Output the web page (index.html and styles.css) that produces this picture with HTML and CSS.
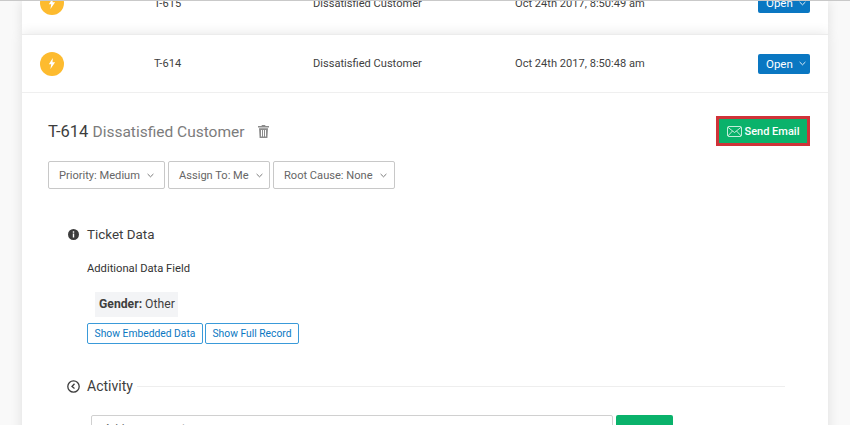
FILE: index.html
```html
<!DOCTYPE html>
<html lang="en">
<head>
<meta charset="utf-8">
<title>Tickets</title>
<link rel="stylesheet" href="styles.css">
</head>
<body>
<div class="page">
  <div class="card card-prev">
    <div class="row">
      <span class="bolt"><svg viewBox="0 0 10 14" width="8" height="11"><path d="M6 0 1 8h3L3 14l6-8.500H5.700z" fill="#fff"/></svg></span>
      <span class="cell-id">T-615</span>
      <span class="cell-name">Dissatisfied Customer</span>
      <span class="cell-date">Oct 24th 2017, 8:50:49 am</span>
      <button class="open">Open <svg class="chev" viewBox="0 0 8 5" width="7" height="5"><path d="M.7.8 4 4 7.300.8" fill="none" stroke="#fff" stroke-width="1"/></svg></button>
    </div>
  </div>
  <div class="card card-main">
    <div class="row row-main">
      <span class="bolt"><svg viewBox="0 0 10 14" width="8" height="11"><path d="M6 0 1 8h3L3 14l6-8.500H5.700z" fill="#fff"/></svg></span>
      <span class="cell-id">T-614</span>
      <span class="cell-name">Dissatisfied Customer</span>
      <span class="cell-date">Oct 24th 2017, 8:50:48 am</span>
      <button class="open">Open <svg class="chev" viewBox="0 0 8 5" width="7" height="5"><path d="M.7.8 4 4 7.300.8" fill="none" stroke="#fff" stroke-width="1"/></svg></button>
    </div>
    <div class="detail">
      <div class="title-row">
        <h1 class="title"><span class="title-id">T-614</span> <span class="title-name">Dissatisfied Customer</span></h1>
        <svg class="trash" viewBox="0 0 11 12" width="11" height="13" preserveAspectRatio="none"><path d="M4 0h3l.6 1H11v1.300H0V1h3.400zM1 3h9l-.6 9H1.600zM3 4.500v6h1v-6zm2 0v6h1v-6zm2 0v6h1v-6z" fill="#8b8b8b" fill-rule="evenodd"/></svg>
        <button class="send"><svg viewBox="0 0 15 11" width="15" height="11"><g fill="none" stroke="#d9f3e6" stroke-width=".9"><rect x=".5" y=".5" width="14" height="10" rx="1.500"/><path d="M.8 1.200 7.500 6.500l6.700-5.300M.8 10 5.500 5M14.200 10 9.500 5"/></g></svg>Send Email</button>
      </div>
      <div class="filters">
        <button class="filter filter-1">Priority: Medium <svg class="chev" viewBox="0 0 8 5" width="7" height="5"><path d="M.7.8 4 4 7.300.8" fill="none" stroke="#666" stroke-width="1"/></svg></button>
        <button class="filter filter-2">Assign To: Me <svg class="chev" viewBox="0 0 8 5" width="7" height="5"><path d="M.7.8 4 4 7.300.8" fill="none" stroke="#666" stroke-width="1"/></svg></button>
        <button class="filter filter-3">Root Cause: None <svg class="chev" viewBox="0 0 8 5" width="7" height="5"><path d="M.7.8 4 4 7.300.8" fill="none" stroke="#666" stroke-width="1"/></svg></button>
      </div>
      <section class="ticket-data">
        <h2 class="section-head">
          <svg class="section-icon" viewBox="0 0 11 11" width="11" height="11"><path d="M5.500 0a5.500 5.500 0 1 0 0 11 5.500 5.500 0 0 0 0-11zM4.800 2.300h1.400v1.400H4.800zm0 2.300h1.400v3.900H4.800z" fill="#3d3d3d" fill-rule="evenodd"/></svg>
          <span class="head-ticket">Ticket Data</span>
        </h2>
        <div class="indent">
          <p class="field-label">Additional Data Field</p>
          <div class="chip"><b>Gender:</b> Other</div>
          <div class="links">
            <button class="link">Show Embedded Data</button>
            <button class="link">Show Full Record</button>
          </div>
        </div>
      </section>
      <section class="activity">
        <h2 class="section-head">
          <svg class="section-icon clock" viewBox="0 0 13 13" width="13" height="13"><circle cx="6.500" cy="6.500" r="5.700" fill="none" stroke="#3d3d3d" stroke-width="1.300"/><path d="M7.500 3.800 5 6.500l2.500 2" fill="none" stroke="#3d3d3d" stroke-width="1.300"/></svg>
          Activity
          <span class="rule"></span>
        </h2>
        <div class="comment">
          <div class="comment-input">Add a comment</div>
          <button class="comment-send">Send</button>
        </div>
      </section>
    </div>
  </div>
</div>
</body>
</html>
```
FILE: styles.css
```css
* { box-sizing: border-box; }
html, body { margin: 0; height: 425px; overflow: hidden; }
body { font-family: Roboto, "Liberation Sans", sans-serif; color: #3f3f3f; background: #f9f9f9; }
button { font-family: inherit; cursor: pointer; }
h1, h2, p { margin: 0; font-weight: 400; }

.page { width: 850px; height: 425px; padding: 0 22px; border-top: 1px solid #c9c9c9; overflow: hidden; }
.card { width: 806px; background: #fff; box-shadow: 0 0 12px rgba(0, 0, 0, .11); }
.card-prev { height: 33px; padding-bottom: 2px; display: flex; align-items: flex-end; overflow: hidden; }
.card-main { position: relative; height: 420px; border-top: 1px solid #ececec; }

.row { width: 100%; height: 58px; flex: none; display: grid; grid-template-columns: 114px 159px 202px 243px 52px; align-items: center; padding-left: 18px; font-size: 11.100px; }
.row-main { border-bottom: 1px solid #efefef; }
.bolt { width: 24px; height: 24px; border-radius: 50%; background: #fdbb2f; display: flex; align-items: center; justify-content: center; }
.open { width: 52px; height: 20px; padding: 0 0 0 8px; border: 0; border-radius: 2px; background: #0a77c2; color: #fff; font-size: 11.500px; display: flex; align-items: center; gap: 6px; }
.chev { flex: none; }

.detail { padding: 23px 18px 0 26px; }
.title-row { display: flex; align-items: center; height: 30px; }
.title { font-size: 16.500px; color: #3d3d3d; }
.title-name { font-size: 15.500px; color: #7c7c7c; }
.trash { margin-left: 13px; }
.send { margin-left: auto; width: 94px; height: 30px; padding: 0; border: 3px solid #cf3339; background: #0ab26b; color: #fff; font-size: 11px; font-weight: 500; display: flex; align-items: center; justify-content: center; gap: 3px; }

.filters { display: flex; gap: 3px; margin-top: 15px; }
.filter { height: 28px; padding: 0 0 0 10px; background: #fff; border: 1px solid #c8c8c8; border-radius: 2px; color: #666; font-size: 11.100px; display: flex; align-items: center; gap: 7px; }
.filter-1 { width: 117px; }
.filter-2 { width: 102px; }
.filter-3 { width: 122px; }

.ticket-data { margin-top: 35px; padding-left: 20px; }
.section-head { font-size: 14px; color: #3d3d3d; display: flex; align-items: center; gap: 8px; height: 20px; }
.head-ticket { font-size: 13.400px; }
.section-icon { flex: none; }
.indent { padding-left: 19px; }
.field-label { font-size: 11.200px; color: #333; margin-top: 17px; line-height: 16px; }
.chip { display: inline-block; margin: 15px 0 0 8px; height: 25px; padding: 0 4px; line-height: 25px; background: #f3f4f6; font-size: 12.200px; width: 83px; white-space: nowrap; }
.links { display: flex; gap: 2px; margin-top: 6px; }
.link { height: 21px; padding: 0; background: #fff; border: 1px solid #3a9ad9; border-radius: 2px; color: #0a77c2; font-size: 10.300px; }
.link:first-child { width: 116px; }
.link:last-child { width: 94px; }

.activity { margin-top: 32px; padding-left: 19px; padding-right: 25px; }
.activity .section-head { gap: 0; }
.clock { margin-right: 7px; }
.rule { flex: 1; height: 1px; margin-left: 4px; background: #eee; }
.comment { display: flex; align-items: flex-start; gap: 3px; margin: 19px 0 0 24px; }
.comment-input { width: 522px; height: 34px; padding: 5px 12px; border: 1px solid #d0d0d0; border-radius: 2px; font-size: 11.500px; color: #666; }
.comment-send { width: 57px; height: 28px; border: 0; border-radius: 2px; background: #0ab26b; color: #fff; font-size: 11.500px; }
```
